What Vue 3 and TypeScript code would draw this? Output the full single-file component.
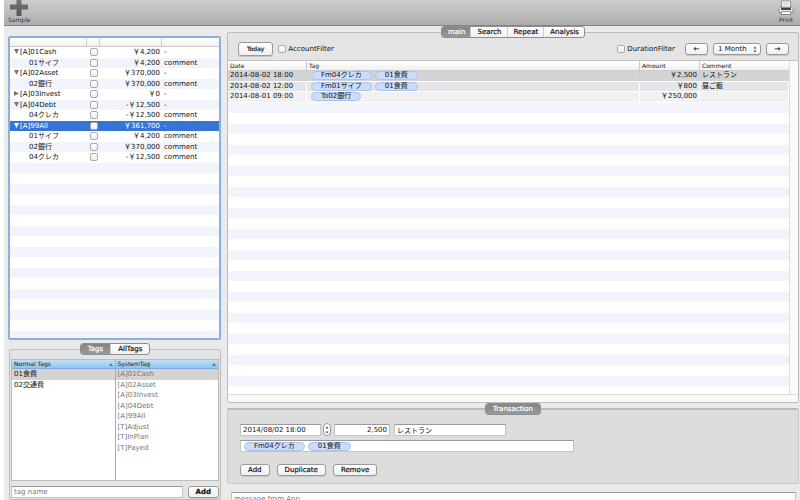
<script setup lang="ts">
import { ref } from 'vue'

interface Account {
  name: string
  amount: string
  comment: string
  kind: 'open' | 'closed' | 'leaf'
}

interface Entry {
  date: string
  tags: string[]
  amount: string
  comment: string
}

const accounts: Account[] = [
  { name: '[A]01Cash', amount: '¥4,200', comment: '-', kind: 'open' },
  { name: '01サイフ', amount: '¥4,200', comment: 'comment', kind: 'leaf' },
  { name: '[A]02Asset', amount: '¥370,000', comment: '-', kind: 'open' },
  { name: '02銀行', amount: '¥370,000', comment: 'comment', kind: 'leaf' },
  { name: '[A]03Invest', amount: '¥0', comment: '-', kind: 'closed' },
  { name: '[A]04Debt', amount: '-¥12,500', comment: '-', kind: 'open' },
  { name: '04クレカ', amount: '-¥12,500', comment: 'comment', kind: 'leaf' },
  { name: '[A]99All', amount: '¥361,700', comment: '-', kind: 'open' },
  { name: '01サイフ', amount: '¥4,200', comment: 'comment', kind: 'leaf' },
  { name: '02銀行', amount: '¥370,000', comment: 'comment', kind: 'leaf' },
  { name: '04クレカ', amount: '-¥12,500', comment: 'comment', kind: 'leaf' },
]

const entries: Entry[] = [
  { date: '2014-08-02 18:00', tags: ['Fm04クレカ', '01食費'], amount: '¥2,500', comment: 'レストラン' },
  { date: '2014-08-02 12:00', tags: ['Fm01サイフ', '01食費'], amount: '¥800', comment: '昼ご飯' },
  { date: '2014-08-01 09:00', tags: ['To02銀行'], amount: '¥250,000', comment: '' },
]

const normalTags = ['01食費', '02交通費']
const systemTags = ['[A]01Cash', '[A]02Asset', '[A]03Invest', '[A]04Debt', '[A]99All', '[T]Adjust', '[T]InPlan', '[T]Payed']
const views = ['main', 'Search', 'Repeat', 'Analysis']
const tagViews = ['Tags', 'AllTags']

const view = ref('main')
const tagView = ref('Tags')
const selectedAccount = ref(7)
const selectedEntry = ref(0)
const selectedTag = ref(0)
const period = ref('1 Month')
const date = ref('2014/08/02 18:00')
const amount = ref('2,500')
const comment = ref('レストラン')

// Yen amounts are shown with the full-width sign of the Japanese font.
const yen = (text: string): string => text.replace(/\u00a5/, '\uffe5')
</script>

<template>
  <div class="window">
    <header class="toolbar">
      <button class="tool" type="button">
        <svg class="plus" width="20" height="16" viewBox="0 0 20 16" aria-hidden="true">
          <defs>
            <linearGradient id="plusFill" x1="0" y1="0" x2="0" y2="1">
              <stop offset="0" stop-color="#7c7c7c" />
              <stop offset="1" stop-color="#555" />
            </linearGradient>
          </defs>
          <path d="M7.500 -3h5v7.500h6.500v5h-6.500v6.500h-5v-6.500h-6.500v-5h6.500z" fill="url(#plusFill)" />
        </svg>
        <span>Sample</span>
      </button>
      <button class="tool" type="button">
        <svg width="16" height="16" viewBox="0 0 16 16" aria-hidden="true">
          <path d="M3.500 1h9v6h-9z" fill="#fafafa" stroke="#888" stroke-width=".8" />
          <path d="M5 3h6M5 4.500h6" stroke="#bbb" stroke-width=".7" />
          <path d="M3.500 6L1 8.500v4h14v-4L12.500 6v2h-9z" fill="#f2f2f2" stroke="#777" stroke-width=".8" />
          <path d="M3 8h10v2H3z" fill="#444" />
          <path d="M3.500 11.500h9l.5 3H3z" fill="#fff" stroke="#777" stroke-width=".8" />
        </svg>
        <span>Print</span>
      </button>
    </header>

    <div class="body">
      <aside class="side">
        <div class="outline">
          <table class="grid">
            <colgroup><col class="c-name" /><col class="c-check" /><col class="c-sum" /><col /></colgroup>
            <thead><tr><th></th><th></th><th></th><th></th></tr></thead>
            <tbody>
              <tr v-for="(a, i) in accounts" :key="i" :class="{ active: i === selectedAccount }" @click="selectedAccount = i">
                <td :class="a.kind">
                  <svg v-if="a.kind !== 'leaf'" class="arrow" width="5" height="5" viewBox="0 0 5 5" aria-hidden="true">
                    <path :d="a.kind === 'open' ? 'M0 0h5L2.500 5z' : 'M0 0l5 2.500L0 5z'" fill="currentColor" />
                  </svg>{{ a.name }}
                </td>
                <td class="center"><input type="checkbox" :aria-label="a.name" /></td>
                <td class="num">{{ yen(a.amount) }}</td>
                <td>{{ a.comment }}</td>
              </tr>
            </tbody>
          </table>
        </div>

        <section class="panel tagpanel">
          <div class="tabs">
            <button v-for="t in tagViews" :key="t" type="button" :class="{ on: t === tagView }" @click="tagView = t">{{ t }}</button>
          </div>
          <div class="taglists">
            <div class="list">
              <table class="grid">
                <thead><tr><th>Normal Tags<i class="sort"></i></th></tr></thead>
                <tbody>
                  <tr v-for="(t, i) in normalTags" :key="t" :class="{ picked: i === selectedTag }" @click="selectedTag = i"><td>{{ t }}</td></tr>
                </tbody>
              </table>
            </div>
            <div class="list system">
              <table class="grid">
                <thead><tr><th>SystemTag<i class="sort"></i></th></tr></thead>
                <tbody>
                  <tr v-for="(t, i) in systemTags" :key="t" :class="{ picked: i === selectedTag }"><td>{{ t }}</td></tr>
                </tbody>
              </table>
            </div>
          </div>
          <div class="addrow">
            <input class="field" type="text" placeholder="tag name" aria-label="tag name" />
            <button class="btn strong" type="button">Add</button>
          </div>
        </section>
      </aside>

      <main class="content">
        <section class="panel ledger">
          <div class="tabs views">
            <button v-for="v in views" :key="v" type="button" :class="{ on: v === view }" @click="view = v">{{ v }}</button>
          </div>
          <div class="filters">
            <button class="btn today" type="button">Today</button>
            <label><input type="checkbox" />AccountFilter</label>
            <span class="spacer"></span>
            <label class="duration"><input type="checkbox" />DurationFilter</label>
            <button class="btn step" type="button" aria-label="Previous">←</button>
            <span class="popup">
              <select v-model="period" aria-label="Period"><option>1 Month</option></select>
              <svg width="4" height="7" viewBox="0 0 4 7" aria-hidden="true"><path d="M.5 2.500L2 .5l1.500 2zM.5 4.500L2 6.500l1.500-2z" fill="#444" /></svg>
            </span>
            <button class="btn step" type="button" aria-label="Next">→</button>
          </div>
          <div class="entries">
            <div class="sheet">
              <table class="grid">
                <colgroup><col class="c-date" /><col /><col class="c-amount" /><col class="c-comment" /></colgroup>
                <thead><tr><th>Date</th><th>Tag</th><th>Amount</th><th>Comment</th></tr></thead>
                <tbody>
                  <tr v-for="(e, i) in entries" :key="i" :class="{ picked: i === selectedEntry }" @click="selectedEntry = i">
                    <td>{{ e.date }}</td>
                    <td class="tokens"><span v-for="t in e.tags" :key="t" class="token">{{ t }}</span></td>
                    <td class="num">{{ yen(e.amount) }}</td>
                    <td>{{ e.comment }}</td>
                  </tr>
                </tbody>
              </table>
            </div>
            <div class="vbar"></div>
          </div>
          <div class="hbar"></div>
        </section>

        <section class="panel transaction">
          <div class="tabs"><button class="on" type="button">Transaction</button></div>
          <div class="line">
            <input v-model="date" class="field when" type="text" aria-label="Date" />
            <button class="stepper" type="button" aria-label="Change date">
              <svg width="4" height="8" viewBox="0 0 4 8" aria-hidden="true"><path d="M.5 2.500L2 .5l1.500 2zM.5 5.500L2 7.500l1.500-2z" fill="#444" /></svg>
            </button>
            <input v-model="amount" class="field sum" type="text" aria-label="Amount" />
            <input v-model="comment" class="field note" type="text" aria-label="Comment" />
          </div>
          <div class="field tokenfield"><span class="token">Fm04クレカ</span><span class="token">01食費</span></div>
          <div class="line actions">
            <button class="btn" type="button">Add</button>
            <button class="btn" type="button">Duplicate</button>
            <button class="btn" type="button">Remove</button>
          </div>
        </section>

        <div class="message"><input class="field" type="text" placeholder="message from App" aria-label="message from App" /></div>
      </main>
    </div>
  </div>
</template>

<style>
body {
  background: #fff;
}
</style>

<style scoped>
* {
  box-sizing: border-box;
}
.window {
  display: flex;
  flex-direction: column;
  height: 100vh;
  margin-left: 4px;
  overflow: hidden;
  background: #eaeaea;
  color: #111;
  font: 7px/10px 'DejaVu Sans', 'Noto Sans CJK JP', sans-serif;
}
button,
input,
select {
  margin: 0;
  padding: 0;
  font: inherit;
  color: inherit;
}
.toolbar {
  display: flex;
  justify-content: space-between;
  flex: none;
  height: 26px;
  padding: 0 6px 0 4px;
  background: linear-gradient(#cdcdcd, #adadad);
  border-bottom: 1px solid #858585;
}
.tool {
  display: flex;
  flex-direction: column;
  align-items: center;
  border: 0;
  background: none;
  color: #333;
  font-size: 6px;
  line-height: 8px;
}
.tool svg {
  display: block;
}
.body {
  display: flex;
  flex: 1;
  gap: 6px;
  min-height: 0;
  padding: 0 1px 0 4px;
}
.side {
  display: flex;
  flex-direction: column;
  flex: 0 0 213px;
  padding-top: 10px;
}
.outline {
  flex: 1;
  min-height: 0;
  border: 2px solid #8bb1da;
  border-radius: 2px;
  background: repeating-linear-gradient(#fff 0 11px, #f1f5fb 11px 21px) 0 9px;
}
.grid {
  width: 100%;
  border-collapse: separate;
  border-spacing: 0;
  table-layout: fixed;
}
.grid th {
  height: 9px;
  padding: 0 2px;
  border-right: 1px solid #ccc;
  border-bottom: 1px solid #ccc;
  background: linear-gradient(#fff, #f0f0f0);
  font-size: 6px;
  font-weight: 400;
  line-height: 8px;
  text-align: left;
}
.grid th:last-child {
  border-right: 0;
}
.grid td {
  height: 10px;
  padding: 0 2px;
  line-height: 10px;
  white-space: nowrap;
  overflow: hidden;
  vertical-align: top;
}
.grid tr:nth-child(odd) td {
  height: 11px;
}
.outline td.open,
.outline td.closed {
  padding-left: 4px;
}
.outline td.leaf {
  padding-left: 19px;
}
.arrow {
  margin-right: 1px;
  color: #777;
}
.active td {
  background: #3874d6;
  color: #fff;
}
.active .arrow {
  color: #fff;
}
.c-name {
  width: 77px;
}
.c-check {
  width: 13px;
}
.c-sum {
  width: 62px;
}
.num,
.sum {
  text-align: right;
}
.grid .center {
  padding: 1px 2px 0;
}
.center input {
  display: block;
  margin: 0 auto;
}
input[type='checkbox'] {
  appearance: none;
  width: 8px;
  height: 8px;
  border: 1px solid #aaa;
  border-radius: 2px;
  background: linear-gradient(#fff, #eee);
}
.panel {
  display: flex;
  flex-direction: column;
  border: 1px solid #bdbdbd;
  border-radius: 2px;
  background: #e4e4e4;
}
.tabs {
  display: flex;
  align-self: center;
  flex: none;
  height: 12px;
  margin-top: -7px;
  border: 1px solid #8e8e8e;
  border-radius: 3px;
  background: linear-gradient(#fff, #f0f0f0);
  overflow: hidden;
}
.tabs button {
  padding: 0 7px;
  border: 0;
  border-right: 1px solid #ccc;
  background: none;
  line-height: 10px;
  -webkit-text-stroke: 0.2px;
}
.tabs button:last-child {
  border-right: 0;
}
.tabs.views button {
  padding: 0 5px 0 6px;
}
.tabs .on {
  background: linear-gradient(#858585, #999);
  color: #fff;
}
.tagpanel {
  flex: none;
  margin: 9px 0 0 1px;
  padding: 0 1px 1px;
}
.taglists {
  display: flex;
  height: 122px;
  margin-top: 4px;
  border: 1px solid #bbb;
  background: #fff;
}
.list {
  flex: 1;
}
.system {
  border-left: 1px solid #aaa;
}
.taglists th {
  border-color: #7daad9;
  background: linear-gradient(#c2e0f8, #8ec4f0);
}
.system td {
  color: #777;
}
.sort {
  float: right;
  width: 0;
  margin-top: 3px;
  border: 2px solid transparent;
  border-top: 0;
  border-bottom: 3px solid #4f7fae;
}
.grid .picked td {
  background: #d3d3d3;
}
.addrow {
  display: flex;
  align-items: center;
  gap: 5px;
  margin-top: 5px;
}
.addrow .field {
  flex: 1;
  min-width: 0;
}
.field {
  height: 12px;
  padding: 0 2px;
  border: 1px solid #c4c4c4;
  border-top-color: #999;
  background: #fff;
  line-height: 10px;
}
.field::placeholder {
  color: #777;
  opacity: 1;
}
.btn {
  height: 12px;
  padding: 0 7px;
  border: 1px solid #999;
  border-radius: 3px;
  background: linear-gradient(#fff, #f0f0f0);
  box-shadow: 0 1px 0 #c8c8c8;
  line-height: 10px;
  -webkit-text-stroke: 0.2px;
}
.strong {
  font-weight: 700;
}
.content {
  display: flex;
  flex-direction: column;
  flex: 1;
  min-width: 0;
  padding-top: 6px;
}
.ledger {
  flex: 1;
  min-height: 0;
}
.filters {
  display: flex;
  align-items: center;
  flex: none;
  gap: 5px;
  height: 22px;
  padding: 0 9px 0 10px;
}
.filters label {
  display: flex;
  align-items: center;
  gap: 2px;
}
.filters .duration {
  margin-right: 5px;
}
.spacer {
  flex: 1;
}
.today {
  height: 14px;
  padding: 0 8px;
  font-size: 6px;
}
.step {
  width: 23px;
  padding: 0;
}
.popup {
  display: flex;
  align-items: center;
  height: 12px;
  padding: 0 3px 0 4px;
  border: 1px solid #999;
  border-radius: 3px;
  background: linear-gradient(#fff, #f0f0f0);
  box-shadow: 0 1px 0 #c8c8c8;
}
.popup select {
  width: 35px;
  appearance: none;
  border: 0;
  background: none;
  line-height: 10px;
}
.entries {
  display: flex;
  flex: 1;
  min-height: 0;
  border-top: 1px solid #c2c2c2;
  background: #fff;
}
.sheet {
  flex: 1;
  min-width: 0;
  background: repeating-linear-gradient(#fff 0 11px, #f1f5fb 11px 21px) 0 10px;
}
.sheet th {
  height: 10px;
}
.c-date {
  width: 79px;
}
.c-amount {
  width: 60px;
}
.c-comment {
  width: 89px;
}
.sheet td {
  border-right: 1px solid #fff;
  border-bottom: 1px solid #fff;
  background: #f1f1f1;
}
.sheet td:nth-child(n) {
  line-height: 9px;
}
.sheet tr:nth-child(even) td {
  background: #e3e5e8;
}
.sheet .picked td {
  border-right-color: #d0d0d0;
}
.grid .tokens {
  padding-left: 4px;
}
.token {
  display: inline-block;
  height: 9px;
  margin-right: 3px;
  padding: 0 9px;
  border: 1px solid #abc3ee;
  border-radius: 5px;
  background: #cddcf7;
  line-height: 7px;
  vertical-align: top;
}
.vbar {
  flex: 0 0 9px;
  border-left: 1px solid #ddd;
  background: #fafafa;
}
.hbar {
  flex: 0 0 8px;
  border-top: 1px solid #ddd;
  background: #fafafa;
}
.transaction {
  flex: none;
  height: 76px;
  margin-top: 5px;
  padding: 0 12px;
  border-color: #c8c8c8;
  border-top: 2px solid #bbb;
  background: #ddd;
}
.line {
  display: flex;
  align-items: center;
}
.transaction .tabs + .line {
  margin-top: 8px;
}
.when {
  width: 81px;
}
.stepper {
  display: flex;
  align-items: center;
  justify-content: center;
  width: 8px;
  height: 13px;
  margin: 0 3px 0 2px;
  border: 1px solid #999;
  border-radius: 4px;
  background: #fff;
}
.sum {
  width: 56px;
}
.note {
  width: 112px;
  margin-left: 4px;
}
.tokenfield {
  display: flex;
  align-items: center;
  width: 334px;
  margin-top: 4px;
  padding-left: 3px;
}
.actions {
  gap: 7px;
  margin-top: 12px;
}
.message {
  flex: none;
  height: 8px;
  margin: 8px 3px 0 4px;
  overflow: hidden;
}
.message .field {
  display: block;
  width: 100%;
  height: 14px;
}
</style>
